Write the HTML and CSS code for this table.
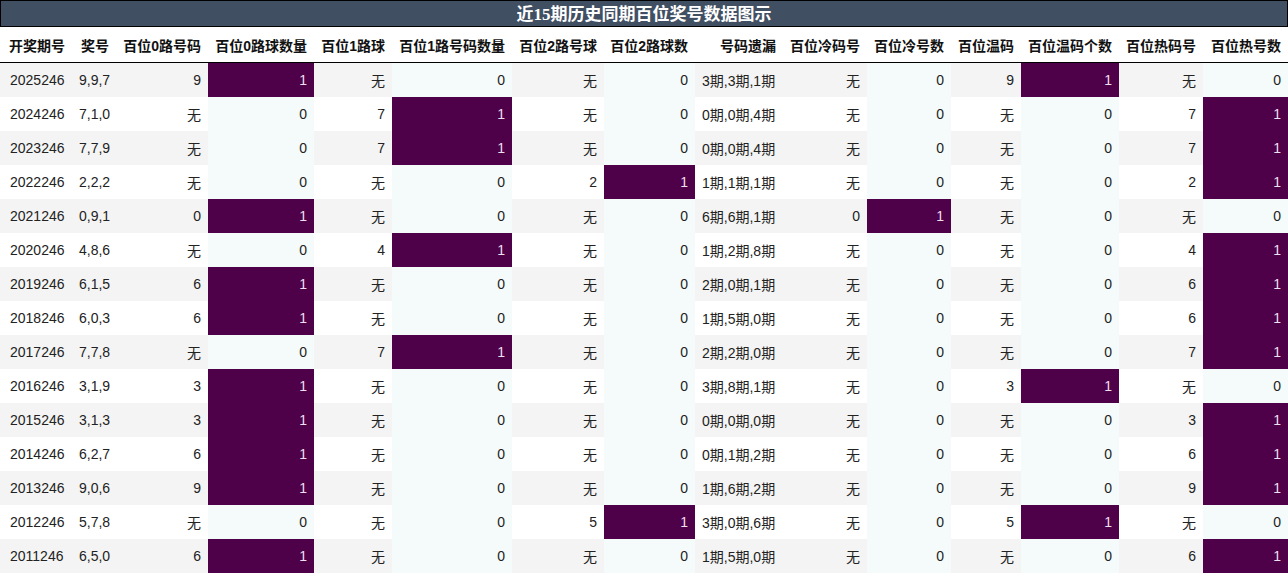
FILE: index.html
```html
<!DOCTYPE html>
<html lang="zh">
<head>
<meta charset="utf-8">
<title>近15期历史同期百位奖号数据图示</title>
<link rel="stylesheet" href="styles.css">
</head>
<body>
<div class="chart">
  <div class="title">近<span class="num">15</span>期历史同期百位奖号数据图示</div>
  <table class="grid">
    <colgroup>
      <col class="c1"><col class="c2"><col class="c3"><col class="c4"><col class="c5">
      <col class="c6"><col class="c7"><col class="c8"><col class="c9"><col class="c10">
      <col class="c11"><col class="c12"><col class="c13"><col class="c14"><col class="c15">
    </colgroup>
    <thead>
      <tr>
        <th class="l">开奖期号</th><th class="m">奖号</th><th>百位0路号码</th><th>百位0路球数量</th><th>百位1路球</th>
        <th>百位1路号码数量</th><th>百位2路号球</th><th>百位2路球数</th><th>号码遗漏</th><th>百位冷码号</th>
        <th>百位冷号数</th><th>百位温码</th><th>百位温码个数</th><th>百位热码号</th><th>百位热号数</th>
      </tr>
    </thead>
    <tbody>
      <tr><td class="l">2025246</td><td class="l">9,9,7</td><td>9</td><td class="n hi">1</td><td>无</td><td class="n">0</td><td>无</td><td class="n">0</td><td class="l">3期,3期,1期</td><td>无</td><td class="n">0</td><td>9</td><td class="n hi">1</td><td>无</td><td class="n">0</td></tr>
      <tr><td class="l">2024246</td><td class="l">7,1,0</td><td>无</td><td class="n">0</td><td>7</td><td class="n hi">1</td><td>无</td><td class="n">0</td><td class="l">0期,0期,4期</td><td>无</td><td class="n">0</td><td>无</td><td class="n">0</td><td>7</td><td class="n hi">1</td></tr>
      <tr><td class="l">2023246</td><td class="l">7,7,9</td><td>无</td><td class="n">0</td><td>7</td><td class="n hi">1</td><td>无</td><td class="n">0</td><td class="l">0期,0期,4期</td><td>无</td><td class="n">0</td><td>无</td><td class="n">0</td><td>7</td><td class="n hi">1</td></tr>
      <tr><td class="l">2022246</td><td class="l">2,2,2</td><td>无</td><td class="n">0</td><td>无</td><td class="n">0</td><td>2</td><td class="n hi">1</td><td class="l">1期,1期,1期</td><td>无</td><td class="n">0</td><td>无</td><td class="n">0</td><td>2</td><td class="n hi">1</td></tr>
      <tr><td class="l">2021246</td><td class="l">0,9,1</td><td>0</td><td class="n hi">1</td><td>无</td><td class="n">0</td><td>无</td><td class="n">0</td><td class="l">6期,6期,1期</td><td>0</td><td class="n hi">1</td><td>无</td><td class="n">0</td><td>无</td><td class="n">0</td></tr>
      <tr><td class="l">2020246</td><td class="l">4,8,6</td><td>无</td><td class="n">0</td><td>4</td><td class="n hi">1</td><td>无</td><td class="n">0</td><td class="l">1期,2期,8期</td><td>无</td><td class="n">0</td><td>无</td><td class="n">0</td><td>4</td><td class="n hi">1</td></tr>
      <tr><td class="l">2019246</td><td class="l">6,1,5</td><td>6</td><td class="n hi">1</td><td>无</td><td class="n">0</td><td>无</td><td class="n">0</td><td class="l">2期,0期,1期</td><td>无</td><td class="n">0</td><td>无</td><td class="n">0</td><td>6</td><td class="n hi">1</td></tr>
      <tr><td class="l">2018246</td><td class="l">6,0,3</td><td>6</td><td class="n hi">1</td><td>无</td><td class="n">0</td><td>无</td><td class="n">0</td><td class="l">1期,5期,0期</td><td>无</td><td class="n">0</td><td>无</td><td class="n">0</td><td>6</td><td class="n hi">1</td></tr>
      <tr><td class="l">2017246</td><td class="l">7,7,8</td><td>无</td><td class="n">0</td><td>7</td><td class="n hi">1</td><td>无</td><td class="n">0</td><td class="l">2期,2期,0期</td><td>无</td><td class="n">0</td><td>无</td><td class="n">0</td><td>7</td><td class="n hi">1</td></tr>
      <tr><td class="l">2016246</td><td class="l">3,1,9</td><td>3</td><td class="n hi">1</td><td>无</td><td class="n">0</td><td>无</td><td class="n">0</td><td class="l">3期,8期,1期</td><td>无</td><td class="n">0</td><td>3</td><td class="n hi">1</td><td>无</td><td class="n">0</td></tr>
      <tr><td class="l">2015246</td><td class="l">3,1,3</td><td>3</td><td class="n hi">1</td><td>无</td><td class="n">0</td><td>无</td><td class="n">0</td><td class="l">0期,0期,0期</td><td>无</td><td class="n">0</td><td>无</td><td class="n">0</td><td>3</td><td class="n hi">1</td></tr>
      <tr><td class="l">2014246</td><td class="l">6,2,7</td><td>6</td><td class="n hi">1</td><td>无</td><td class="n">0</td><td>无</td><td class="n">0</td><td class="l">0期,1期,2期</td><td>无</td><td class="n">0</td><td>无</td><td class="n">0</td><td>6</td><td class="n hi">1</td></tr>
      <tr><td class="l">2013246</td><td class="l">9,0,6</td><td>9</td><td class="n hi">1</td><td>无</td><td class="n">0</td><td>无</td><td class="n">0</td><td class="l">1期,6期,2期</td><td>无</td><td class="n">0</td><td>无</td><td class="n">0</td><td>9</td><td class="n hi">1</td></tr>
      <tr><td class="l">2012246</td><td class="l">5,7,8</td><td>无</td><td class="n">0</td><td>无</td><td class="n">0</td><td>5</td><td class="n hi">1</td><td class="l">3期,0期,6期</td><td>无</td><td class="n">0</td><td>5</td><td class="n hi">1</td><td>无</td><td class="n">0</td></tr>
      <tr><td class="l">2011246</td><td class="l">6,5,0</td><td>6</td><td class="n hi">1</td><td>无</td><td class="n">0</td><td>无</td><td class="n">0</td><td class="l">1期,5期,0期</td><td>无</td><td class="n">0</td><td>无</td><td class="n">0</td><td>6</td><td class="n hi">1</td></tr>
    </tbody>
  </table>
</div>
</body>
</html>
```
FILE: styles.css
```css
html, body {
  margin: 0;
  padding: 0;
  background: #ffffff;
}

.chart {
  width: 1288px;
  font-family: "Liberation Sans", "Noto Sans CJK SC", sans-serif;
  color: #222222;
}

.title {
  box-sizing: border-box;
  height: 27px;
  border: 1px solid #000000;
  background: #414f63;
  color: #ffffff;
  font-family: "Noto Sans CJK SC", sans-serif;
  font-weight: bold;
  font-size: 17px;
  line-height: 24px;
  text-align: center;
}

.title .num {
  font-family: "Liberation Serif", serif;
  font-weight: bold;
}

.grid {
  width: 1288px;
  border-collapse: collapse;
  table-layout: fixed;
}

.c1 { width: 72px; }
.c2 { width: 46px; }
.c3 { width: 90px; }
.c4 { width: 106px; }
.c5 { width: 78px; }
.c6 { width: 120px; }
.c7 { width: 92px; }
.c8 { width: 91px; }
.c9 { width: 88px; }
.c10 { width: 84px; }
.c11 { width: 84px; }
.c12 { width: 70px; }
.c13 { width: 98px; }
.c14 { width: 84px; }
.c15 { width: 85px; }

.grid th {
  height: 35px;
  padding: 0 7px 0 0;
  font-size: 14px;
  font-weight: bold;
  color: #111111;
  text-align: right;
  white-space: nowrap;
  border-bottom: 1px solid #000000;
  background: #ffffff;
}

.grid th.l {
  text-align: left;
  padding: 0 0 0 9px;
}

.grid th.m {
  text-align: center;
  padding: 0;
}

.grid td {
  height: 34px;
  padding: 0 7px 0 0;
  font-size: 14px;
  text-align: right;
  white-space: nowrap;
  background: #ffffff;
}

.grid tbody tr:nth-child(odd) td {
  background: #f4f4f4;
}

.grid td.l {
  text-align: left;
  padding: 0 0 0 7px;
}

.grid td.l:first-child {
  padding-left: 10px;
}

.grid tbody tr td.n {
  background: #f5fbfb;
}

.grid tbody tr td.hi {
  background: #4e0049;
  color: #efdfef;
}
```
